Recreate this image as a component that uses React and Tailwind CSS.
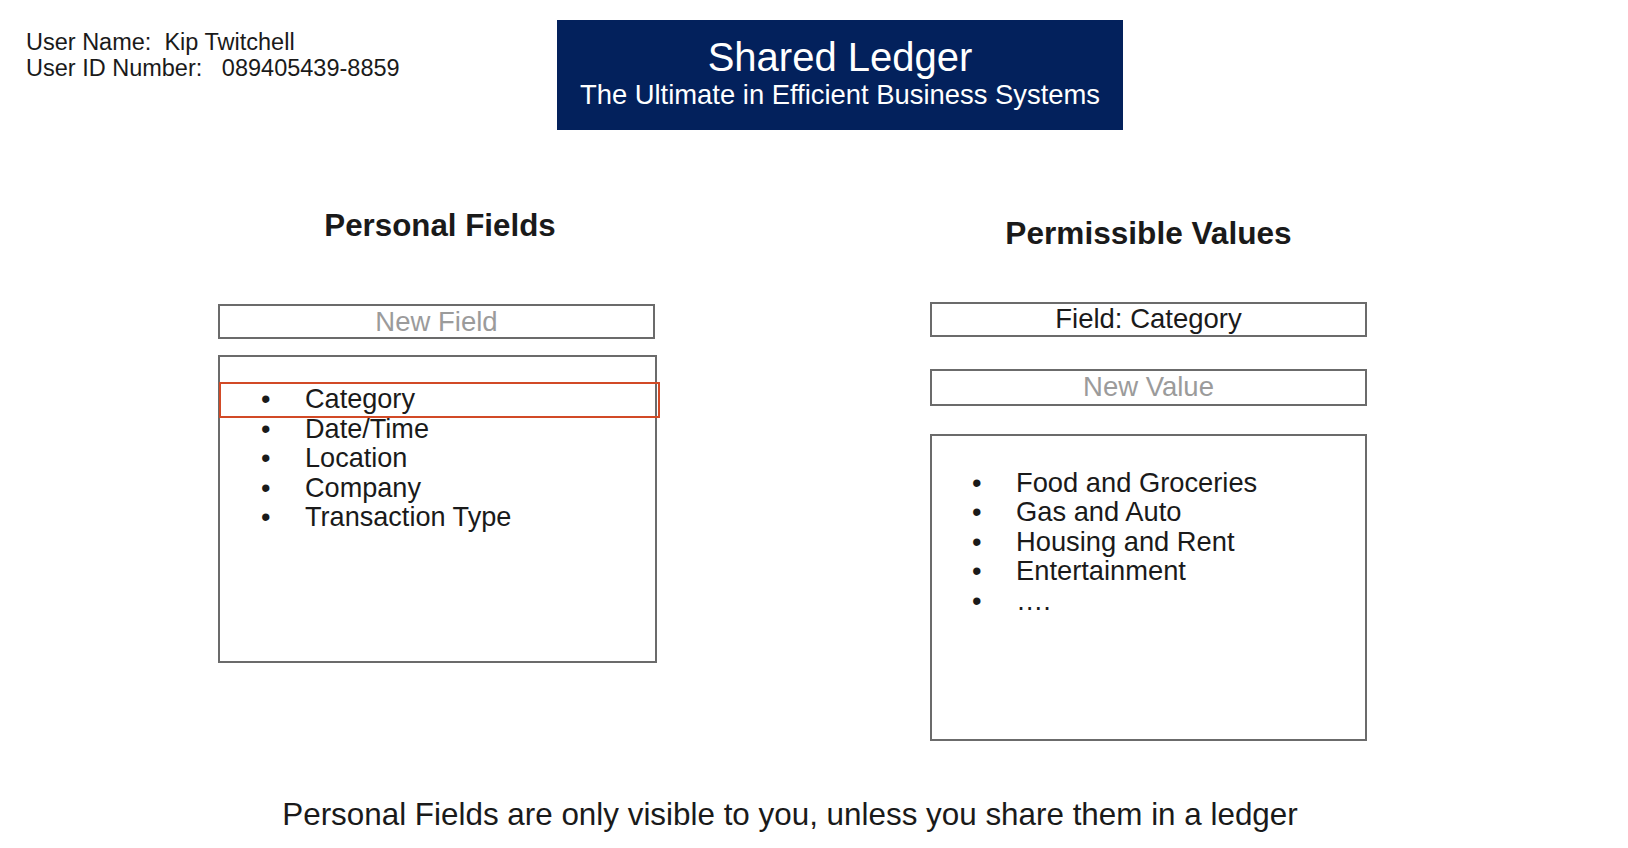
export default function App() {
  const fields = ["Category", "Date/Time", "Location", "Company", "Transaction Type"];
  const values = ["Food and Groceries", "Gas and Auto", "Housing and Rent", "Entertainment", "…."];
  return (
    <div className="w-[1628px] h-[848px] bg-white overflow-hidden font-['Liberation_Sans',Arial,sans-serif] text-[#1a1a1a]">
      <div className="flex items-start pt-[20px]">
        <div className="ml-[26px] w-[531px] pt-[8.5px] text-[23.5px] leading-[26px] whitespace-pre">
          <div>User Name:  Kip Twitchell</div>
          <div>User ID Number:   089405439-8859</div>
        </div>
        <div className="w-[566px] h-[110px] bg-[#03215c] text-white flex flex-col items-center pt-[17px]">
          <div className="text-[40px] leading-[40px]">Shared Ledger</div>
          <div className="text-[27.4px] leading-[30px] mt-[2.5px]">The Ultimate in Efficient Business Systems</div>
        </div>
      </div>

      <div className="flex items-start">
        <div className="ml-[218px] w-[439px] pt-[78px]">
          <h2 className="pl-[5px] text-center text-[31.3px] leading-[36px] font-bold">Personal Fields</h2>
          <div className="mt-[60px] w-[437px] h-[35px] border-2 border-[#6b6b6b] flex items-center justify-center text-[27.5px] text-[#9b9b9b]">
            New Field
          </div>
          <div className="relative mt-[16px] w-[439px] h-[308px] border-2 border-[#6b6b6b] pt-[27px] pl-[41px]">
            <ul className="text-[27.1px] leading-[29.5px]">
              {fields.map((f) => (
                <li key={f} className="flex">
                  <span className="w-[44px] shrink-0">•</span>
                  <span>{f}</span>
                </li>
              ))}
            </ul>
            <div className="absolute left-[-1px] top-[25px] w-[441px] h-[36px] border-2 border-[#d24a26]"></div>
          </div>
        </div>

        <div className="ml-[273px] w-[437px] pt-[84.5px]">
          <h2 className="text-center text-[31.6px] leading-[36px] font-bold">Permissible Values</h2>
          <div className="mt-[51px] w-[437px] h-[35px] border-2 border-[#6b6b6b] flex items-center justify-center text-[27.5px]">
            Field: Category
          </div>
          <div className="mt-[32px] w-[437px] h-[37px] border-2 border-[#6b6b6b] flex items-center justify-center text-[27.5px] text-[#9b9b9b]">
            New Value
          </div>
          <div className="mt-[28px] w-[437px] h-[307px] border-2 border-[#6b6b6b] pt-[32px] pl-[40px]">
            <ul className="text-[27.3px] leading-[29.6px]">
              {values.map((v) => (
                <li key={v} className="flex">
                  <span className="w-[44px] shrink-0">•</span>
                  <span>{v}</span>
                </li>
              ))}
            </ul>
          </div>
        </div>
      </div>

      <div className="mt-[56px] w-[1580px] text-center text-[31.4px] leading-[36px]">
        Personal Fields are only visible to you, unless you share them in a ledger
      </div>
    </div>
  );
}
